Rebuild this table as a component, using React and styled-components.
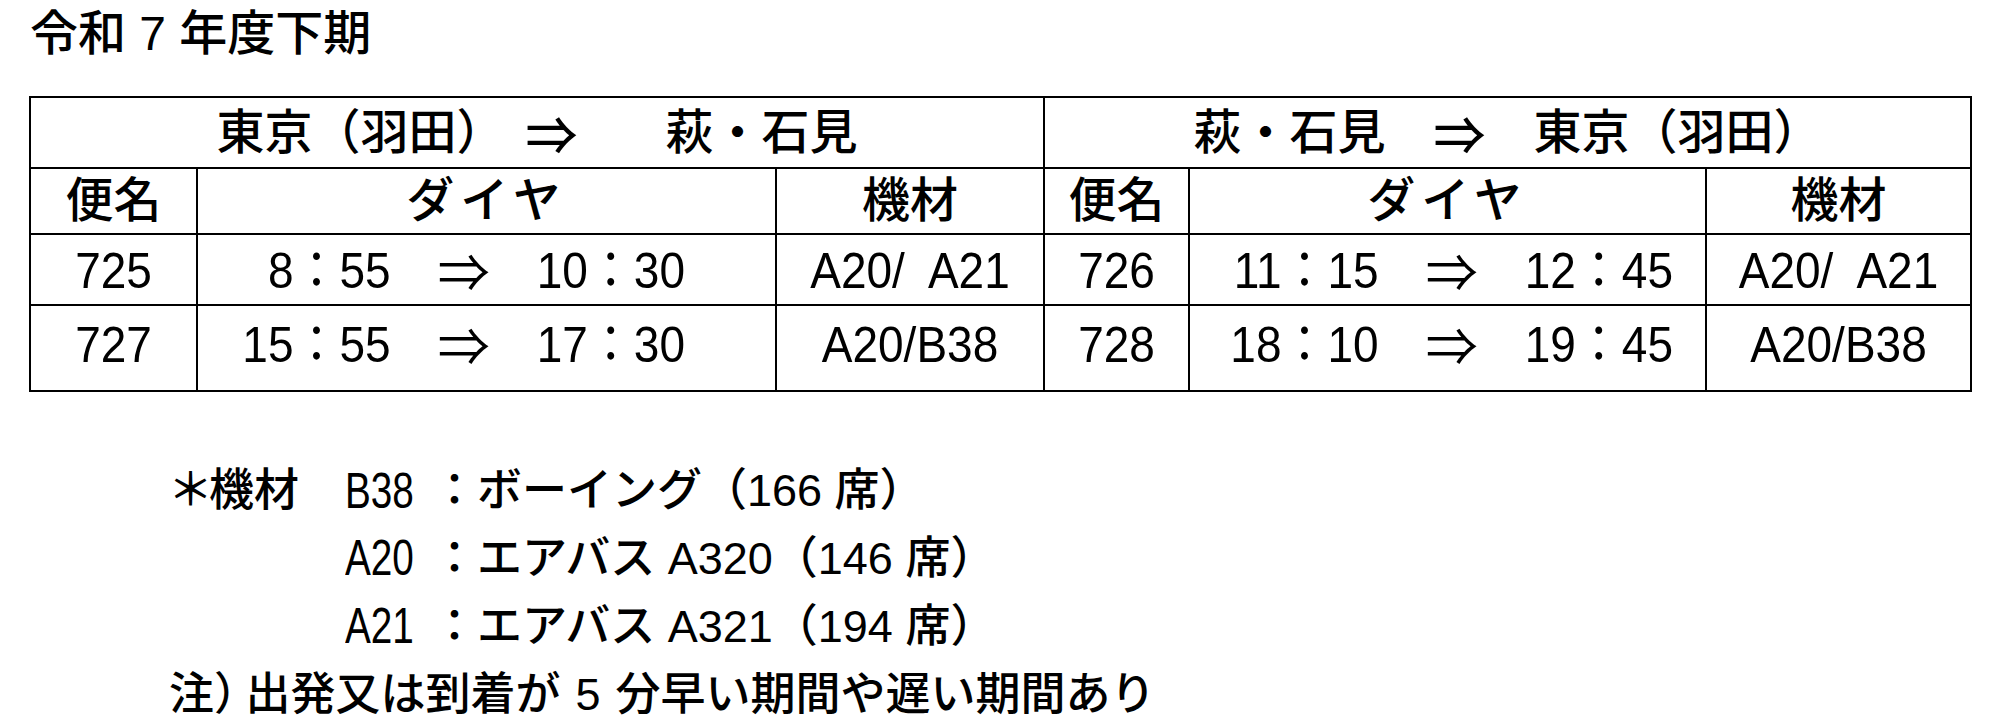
import React from 'react';
import styled, { createGlobalStyle } from 'styled-components';

const GlobalStyle = createGlobalStyle`
  html, body {
    margin: 0;
    padding: 0;
    background: #fff;
  }
  body {
    font-family: "Liberation Sans", "Noto Sans CJK JP", sans-serif;
    color: #000;
  }
`;

const Page = styled.div`
  width: 2000px;
  height: 721px;
  box-sizing: border-box;
  padding: 10px 0 0 29px;
  overflow: hidden;
`;

const Title = styled.h1`
  margin: 0 0 0 1px;
  font-size: 48px;
  font-weight: 500;
  line-height: 48px;
`;

const Timetable = styled.div`
  display: grid;
  grid-template-columns: 167px 579px 268px 145px 517px 265px;
  grid-template-rows: 71px 66px 71px 86px;
  width: 1943px;
  box-sizing: border-box;
  margin-top: 38px;
  border-top: 2px solid #000;
  border-left: 2px solid #000;
`;

const Cell = styled.div`
  display: flex;
  align-items: center;
  justify-content: center;
  box-sizing: border-box;
  border-right: 2px solid #000;
  border-bottom: 2px solid #000;
  line-height: 1;
  white-space: pre;
  padding-bottom: ${(p) => p.$lift || 0}px;
`;

const RouteHead = styled(Cell)`
  grid-column: span 3;
  font-size: 48px;
  font-weight: 500;
`;

const ColHead = styled(Cell)`
  font-size: 48px;
  font-weight: 500;
  letter-spacing: ${(p) => p.$spread || 0}px;
`;

const DataCell = styled(Cell)`
  font-size: 46px;
`;

const TimeCell = styled(Cell)`
  justify-content: flex-end;
  gap: 47px;
  font-size: 46px;
  padding-right: ${(p) => p.$pad}px;
`;

/* the source font has tall, narrow figures */
const Tall = styled.span`
  display: inline-block;
  transform: scaleY(1.1);
`;

const Arrow = styled.span`
  font-family: "Noto Sans CJK JP", sans-serif;
  font-size: 52px;
  margin: 0 ${(p) => p.$after || 0}px 0 ${(p) => p.$before || 0}px;
`;

const Notes = styled.div`
  display: grid;
  grid-template-columns: 173px 87px auto;
  margin: 65px 0 0 143px;
  font-size: 45px;
  font-weight: 500;
  line-height: 68px;
  white-space: pre;
`;

const Label = styled.span`
  font-feature-settings: "palt";
`;

const Code = styled.span`
  display: inline-block;
  transform: scale(0.86, 1.1);
  transform-origin: left center;
`;

const Remark = styled.div`
  grid-column: 1 / -1;
  margin-left: -3px;
`;

const HalfPunct = styled.span`
  font-feature-settings: "halt";
  margin-right: 9px;
`;

const Digit = styled.span`
  margin: 0 15px;
`;

const outbound = [
  { no: '725', dep: '8：55', arr: '10：30', craft: 'A20/  A21' },
  { no: '727', dep: '15：55', arr: '17：30', craft: 'A20/B38' },
];

const inbound = [
  { no: '726', dep: '11：15', arr: '12：45', craft: 'A20/  A21' },
  { no: '728', dep: '18：10', arr: '19：45', craft: 'A20/B38' },
];

const aircraft = [
  { label: '＊機材', code: 'B38', desc: '：ボーイング（166 席）' },
  { label: '', code: 'A20', desc: '：エアバス A320（146 席）' },
  { label: '', code: 'A21', desc: '：エアバス A321（194 席）' },
];

const FlightCells = ({ f, pad, lift }) => (
  <>
    <DataCell $lift={lift}>
      <Tall>{f.no}</Tall>
    </DataCell>
    <TimeCell $pad={pad} $lift={lift}>
      <Tall>{f.dep}</Tall>
      <Arrow>⇒</Arrow>
      <Tall>{f.arr}</Tall>
    </TimeCell>
    <DataCell $lift={lift}>
      <Tall>{f.craft}</Tall>
    </DataCell>
  </>
);

const HeadCells = () => (
  <>
    <ColHead>便名</ColHead>
    <ColHead $spread={6}>ダイヤ</ColHead>
    <ColHead>機材</ColHead>
  </>
);

export default function App() {
  return (
    <>
      <GlobalStyle />
      <Page>
        <Title>令和 7 年度下期</Title>

        <Timetable>
          <RouteHead>
            東京（羽田）　<Arrow $before={-3} $after={40}>⇒</Arrow>　萩・石見
          </RouteHead>
          <RouteHead>
            萩・石見　<Arrow>⇒</Arrow>　東京（羽田）
          </RouteHead>
          <HeadCells />
          <HeadCells />
          {outbound.map((f, i) => (
            <React.Fragment key={f.no}>
              <FlightCells f={f} pad={90} lift={i === 1 ? 8 : 0} />
              <FlightCells f={inbound[i]} pad={32} lift={i === 1 ? 8 : 0} />
            </React.Fragment>
          ))}
        </Timetable>

        <Notes>
          {aircraft.map((a) => (
            <React.Fragment key={a.code}>
              <Label>{a.label}</Label>
              <span>
                <Code>{a.code}</Code>
              </span>
              <span>{a.desc}</span>
            </React.Fragment>
          ))}
          <Remark>
            注<HalfPunct>）</HalfPunct>出発又は到着が<Digit>5</Digit>分早い期間や遅い期間あり
          </Remark>
        </Notes>
      </Page>
    </>
  );
}
